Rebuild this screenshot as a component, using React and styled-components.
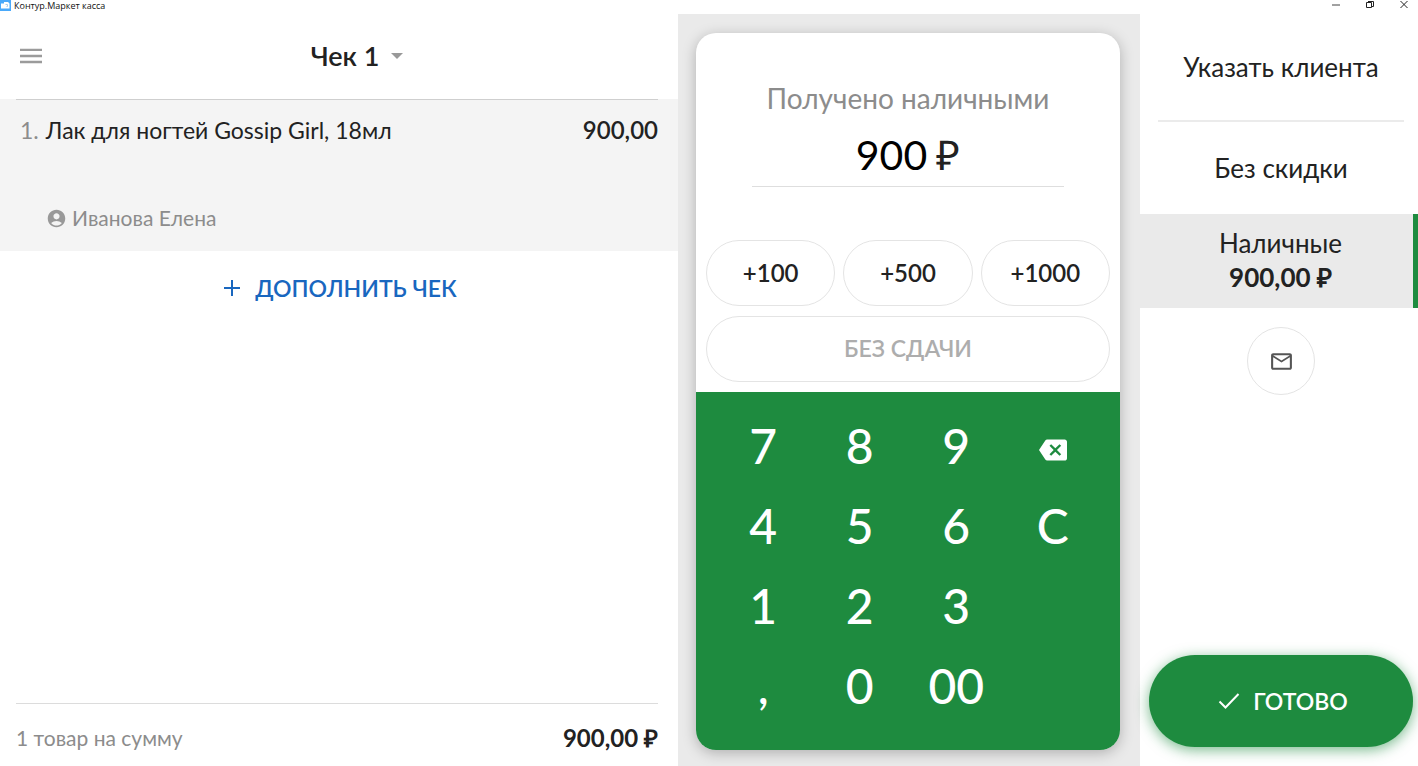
import { useState } from "react";
import styled, { createGlobalStyle } from "styled-components";
import { MdAccountCircle, MdBackspace, MdOutlineEmail } from "react-icons/md";

const GlobalStyle = createGlobalStyle`
  * {
    box-sizing: border-box;
  }

  body {
    margin: 0;
    background-color: white;
    color: #222;
    font-family: Lato, "Open Sans", sans-serif;
  }

  button,
  input {
    margin: 0;
    padding: 0;
    border: none;
    background: none;
    color: inherit;
    font: inherit;
  }

  button {
    cursor: pointer;
  }
`;

const Window = styled.div`
  min-height: 100vh;
  display: flex;
  flex-direction: column;
`;

const TitleBar = styled.header`
  height: 14px;
  display: flex;
  align-items: flex-start;
  justify-content: space-between;
  font-family: "Open Sans", "Noto Sans", sans-serif;
  font-size: 9px;
  line-height: 12px;
  color: #111;
`;

const AppName = styled.div`
  display: flex;
  gap: 3px;
`;

const WindowButtons = styled.div`
  display: flex;
  gap: 22px;
  padding-right: 8px;
`;

const WindowButton = styled.button`
  width: 12px;
  height: 10px;
  display: flex;
  justify-content: center;
`;

const Columns = styled.main`
  flex: 1;
  display: grid;
  grid-template-columns: 678fr 462fr 278fr;
`;

const Receipt = styled.section`
  display: flex;
  flex-direction: column;
`;

const ReceiptHeader = styled.div`
  height: 85px;
  padding: 0 8px 2px 20px;
  display: grid;
  grid-template-columns: 24px 1fr;
  align-items: center;
`;

const MenuButton = styled.button`
  display: flex;
`;

const ReceiptSelect = styled.button`
  justify-self: center;
  display: flex;
  align-items: center;
  gap: 12px;
  font-size: 27px;
  font-weight: 600;
  line-height: 32px;
`;

const ItemList = styled.ol`
  margin: 0;
  padding: 0;
  list-style: none;
`;

const Item = styled.li`
  height: 152px;
  padding: 0 20px 18px 16px;
  display: flex;
  flex-direction: column;
  justify-content: space-between;
  background-color: #f4f4f4;
`;

const ItemRow = styled.div`
  padding: 14px 0 0 4px;
  border-top: 1px solid #cfcfcf;
  display: flex;
  gap: 7px;
  font-size: 23px;
  line-height: 32px;
`;

const ItemNumber = styled.span`
  color: #8c8c8c;
`;

const ItemName = styled.span`
  flex: 1;
`;

const ItemPrice = styled.span`
  font-size: 24px;
  font-weight: 600;
`;

const Seller = styled.div`
  padding-left: 30px;
  display: flex;
  align-items: center;
  gap: 5px;
  font-size: 21px;
  line-height: 30px;
  color: #8c8c8c;
`;

const AddButton = styled.button`
  align-self: center;
  margin-top: 20px;
  padding-left: 2px;
  display: flex;
  align-items: center;
  gap: 14px;
  font-size: 23px;
  font-weight: 600;
  line-height: 34px;
  color: #1967bf;
`;

const Total = styled.div`
  height: 63px;
  margin: auto 20px 0 16px;
  padding-bottom: 8px;
  border-top: 1px solid #dcdcdc;
  box-shadow: 0 1px 0 #eee;
  display: flex;
  align-items: flex-end;
  justify-content: space-between;
  line-height: 40px;
`;

const TotalLabel = styled.span`
  font-size: 21px;
  color: #8c8c8c;
`;

const TotalSum = styled.span`
  font-size: 24px;
  font-weight: 700;
`;

const Payment = styled.section`
  padding: 19px 20px 16px 18px;
  display: flex;
  background-color: #eaeaea;
`;

const Card = styled.div`
  flex: 1;
  display: flex;
  flex-direction: column;
  border-radius: 20px;
  overflow: hidden;
  background-color: white;
  box-shadow: 0 3px 14px rgba(0, 0, 0, 0.25);
`;

const Received = styled.div`
  margin: 0 56px;
  padding-top: 47px;
  display: flex;
  flex-direction: column;
  align-items: center;
  border-bottom: 1px solid #dedede;
`;

const ReceivedLabel = styled.label`
  font-size: 28px;
  line-height: 36px;
  color: #8c8c8c;
`;

const Amount = styled.div`
  padding: 14px 0 6px;
  display: flex;
  gap: 9px;
  font-size: 41px;
  line-height: 50px;
`;

const AmountInput = styled.input`
  width: ${({ $digits }) => $digits}ch;
  height: 50px;
  outline: none;
  color: black;
`;

const Chips = styled.div`
  margin-top: auto;
  padding: 53px 10px 10px;
  display: grid;
  grid-template-columns: repeat(3, 1fr);
  gap: 10px 8px;
`;

const Chip = styled.button`
  height: 66px;
  padding-bottom: 2px;
  grid-column: ${({ $wide }) => ($wide ? "1 / -1" : "auto")};
  border: 1px solid #e4e4e4;
  border-radius: 33px;
  font-size: ${({ $wide }) => ($wide ? "23px" : "24px")};
  font-weight: 600;
  color: ${({ $wide }) => ($wide ? "#adadad" : "#222")};
`;

const Keypad = styled.div`
  padding: 14px 19px 24px;
  display: grid;
  grid-template-columns: repeat(4, 1fr);
  background-color: #1e8b3f;
  color: white;
`;

const Key = styled.button`
  height: 80px;
  grid-column: ${({ $column }) => $column};
  display: flex;
  align-items: center;
  justify-content: center;
  font-size: 48px;
  font-weight: 500;
  line-height: 80px;

  svg {
    margin-top: 8px;
  }
`;

const Sidebar = styled.aside`
  display: flex;
  flex-direction: column;
  font-size: 26px;
  line-height: 34px;
`;

const ClientButton = styled.button`
  height: 108px;
  margin: 0 14px 0 18px;
  border-bottom: 2px solid #ebebeb;
`;

const DiscountButton = styled.button`
  height: 92px;
  padding-left: 4px;
`;

const PaymentMethod = styled.button`
  height: 94px;
  padding: 0 0 2px 8px;
  border-right: 5px solid #1e8b3f;
  display: flex;
  flex-direction: column;
  align-items: center;
  justify-content: center;
  background-color: #eaeaea;
`;

const MethodSum = styled.strong`
  font-weight: 700;
`;

const MailButton = styled.button`
  width: 68px;
  height: 68px;
  margin: 19px 0 0 4px;
  align-self: center;
  display: flex;
  align-items: center;
  justify-content: center;
  border: 1px solid #e4e4e4;
  border-radius: 50%;
  color: #555;
`;

const DoneButton = styled.button`
  height: 92px;
  margin: auto 5px 19px 9px;
  padding-left: 4px;
  display: flex;
  align-items: center;
  justify-content: center;
  gap: 13px;
  border-radius: 46px;
  background-color: #1e8b3f;
  box-shadow: 0 3px 14px rgba(30, 139, 63, 0.6);
  color: white;
  font-size: 23px;
  font-weight: 600;
`;

const LogoIcon = () => (
  <svg width="11" height="11" viewBox="0 0 11 11">
    <rect width="11" height="11" fill="#4aa9fa" />
    <path d="M1 3.500h3V2h4l1.500 1.500V8.500H1z" fill="white" />
    <path d="M5.500 4.500h2v2H6.500" fill="none" stroke="#a9cdec" />
  </svg>
);

const MinimizeIcon = () => (
  <svg width="8" height="10" viewBox="0 0 8 10">
    <path d="M0 5h8" stroke="#444" />
  </svg>
);

const RestoreIcon = () => (
  <svg width="8" height="10" viewBox="0 0 8 10" fill="none" stroke="#222">
    <path d="M.5 2.500h5v5h-5zM2 1.500h5.500v5H6" />
  </svg>
);

const CloseIcon = () => (
  <svg width="8" height="10" viewBox="0 0 8 10" fill="none" stroke="#222">
    <path d="M.5 1l7 7M7.500 1l-7 7" />
  </svg>
);

const MenuIcon = () => (
  <svg width="22" height="16" viewBox="0 0 22 16" fill="#9b9b9b">
    <path d="M0 .7h22v2.400H0zM0 6.800h22v2.400H0zM0 12.800h22v2.400H0z" />
  </svg>
);

const ArrowIcon = () => (
  <svg width="12" height="6" viewBox="0 0 12 6">
    <path d="M0 0h12L6 6z" fill="#999" />
  </svg>
);

const PlusIcon = () => (
  <svg width="18" height="18" viewBox="0 0 18 18">
    <path d="M9 1v16M1 9h16" stroke="currentColor" strokeWidth="2" />
  </svg>
);

const CheckIcon = () => (
  <svg width="22" height="18" viewBox="0 0 22 18">
    <path d="M1.500 9.500l6 6L20.500 2" fill="none" stroke="currentColor" strokeWidth="2" />
  </svg>
);

const keys = [
  { label: "7", column: 1 },
  { label: "8", column: 2 },
  { label: "9", column: 3 },
  { label: "Стереть", column: 4, icon: <MdBackspace size={28} /> },
  { label: "4", column: 1 },
  { label: "5", column: 2 },
  { label: "6", column: 3 },
  { label: "C", column: 4 },
  { label: "1", column: 1 },
  { label: "2", column: 2 },
  { label: "3", column: 3 },
  { label: ",", column: 1 },
  { label: "0", column: 2 },
  { label: "00", column: 3 },
];

const App = () => {
  const [amount, setAmount] = useState("900");

  const press = (key) => {
    if (key.icon) {
      setAmount(amount.slice(0, -1));
    } else if (key.label === "C") {
      setAmount("");
    } else {
      setAmount(amount + key.label);
    }
  };

  const add = (sum) => {
    const value = parseFloat(amount.replace(",", ".")) || 0;
    setAmount(String(value + sum).replace(".", ","));
  };

  return (
    <Window>
      <GlobalStyle />
      <TitleBar>
        <AppName>
          <LogoIcon />
          Контур.Маркет касса
        </AppName>
        <WindowButtons>
          <WindowButton aria-label="Свернуть">
            <MinimizeIcon />
          </WindowButton>
          <WindowButton aria-label="Восстановить">
            <RestoreIcon />
          </WindowButton>
          <WindowButton aria-label="Закрыть">
            <CloseIcon />
          </WindowButton>
        </WindowButtons>
      </TitleBar>
      <Columns>
        <Receipt>
          <ReceiptHeader>
            <MenuButton aria-label="Меню">
              <MenuIcon />
            </MenuButton>
            <ReceiptSelect>
              Чек 1
              <ArrowIcon />
            </ReceiptSelect>
          </ReceiptHeader>
          <ItemList>
            <Item>
              <ItemRow>
                <ItemNumber>1.</ItemNumber>
                <ItemName>Лак для ногтей Gossip Girl, 18мл</ItemName>
                <ItemPrice>900,00</ItemPrice>
              </ItemRow>
              <Seller>
                <MdAccountCircle size={21} color="#999" />
                Иванова Елена
              </Seller>
            </Item>
          </ItemList>
          <AddButton>
            <PlusIcon />
            ДОПОЛНИТЬ ЧЕК
          </AddButton>
          <Total>
            <TotalLabel>1 товар на сумму</TotalLabel>
            <TotalSum>900,00 ₽</TotalSum>
          </Total>
        </Receipt>
        <Payment>
          <Card>
            <Received>
              <ReceivedLabel htmlFor="amount">Получено наличными</ReceivedLabel>
              <Amount>
                <AmountInput
                  id="amount"
                  inputMode="decimal"
                  $digits={amount.length || 1}
                  value={amount}
                  onChange={(e) => setAmount(e.target.value)}
                />
                <span>₽</span>
              </Amount>
            </Received>
            <Chips>
              <Chip onClick={() => add(100)}>+100</Chip>
              <Chip onClick={() => add(500)}>+500</Chip>
              <Chip onClick={() => add(1000)}>+1000</Chip>
              <Chip $wide onClick={() => setAmount("900")}>БЕЗ СДАЧИ</Chip>
            </Chips>
            <Keypad>
              {keys.map((key) => (
                <Key
                  key={key.label}
                  $column={key.column}
                  aria-label={key.label}
                  onClick={() => press(key)}
                >
                  {key.icon || key.label}
                </Key>
              ))}
            </Keypad>
          </Card>
        </Payment>
        <Sidebar>
          <ClientButton>Указать клиента</ClientButton>
          <DiscountButton>Без скидки</DiscountButton>
          <PaymentMethod>
            Наличные
            <MethodSum>900,00 ₽</MethodSum>
          </PaymentMethod>
          <MailButton aria-label="Отправить чек на почту">
            <MdOutlineEmail size={25} />
          </MailButton>
          <DoneButton>
            <CheckIcon />
            ГОТОВО
          </DoneButton>
        </Sidebar>
      </Columns>
    </Window>
  );
};

export default App;
